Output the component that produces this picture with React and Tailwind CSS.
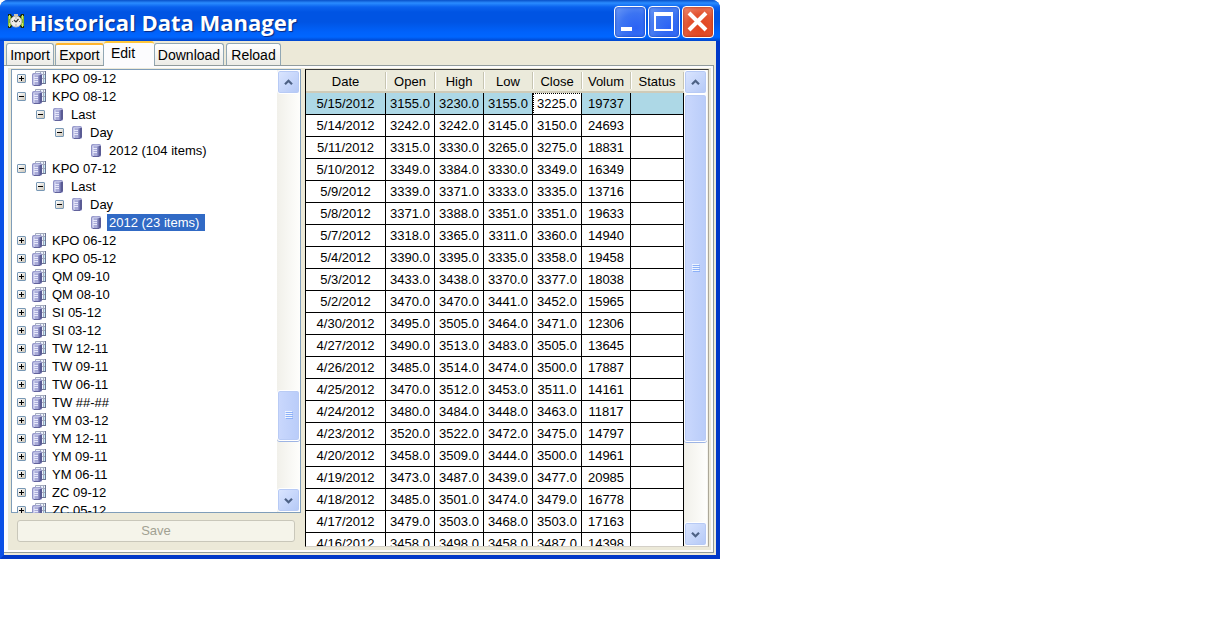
import React from "react";

const tabs = [
  { name: "Import", style: "mt-0.5 mr-px h-[22px] w-12 rounded-t-[3px] border border-b-0 border-[#91a7b4] bg-gradient-to-b from-white to-[#ecebe6]" },
  { name: "Export", style: "mt-0.5 h-[22px] w-[49px] rounded-t-[3px] border border-b-0 border-t-2 border-[#91a7b4] border-t-[#ffb42c] bg-gradient-to-b from-white to-[#ecebe6]" },
  { name: "Edit", style: "z-10 -mb-px h-[25px] w-[50px] rounded-t-[3px] border-t-2 border-t-[#ffc73c] bg-[#fcfcfe] pr-3 pb-1" },
  { name: "Download", style: "mt-0.5 mr-0.5 h-[22px] w-[70px] rounded-t-[3px] border border-b-0 border-[#91a7b4] bg-gradient-to-b from-white to-[#ecebe6]" },
  { name: "Reload", style: "mt-0.5 h-[22px] w-[55px] rounded-t-[3px] border border-b-0 border-[#91a7b4] bg-gradient-to-b from-white to-[#ecebe6]" },
];

const nodes = [
  ["KPO 09-12", 0, false],
  ["KPO 08-12", 0, true],
  ["Last", 1, true],
  ["Day", 2, true],
  ["2012 (104 items)", 3, null],
  ["KPO 07-12", 0, true],
  ["Last", 1, true],
  ["Day", 2, true],
  ["2012 (23 items)", 3, null, true],
  ["KPO 06-12", 0, false],
  ["KPO 05-12", 0, false],
  ["QM 09-10", 0, false],
  ["QM 08-10", 0, false],
  ["SI 05-12", 0, false],
  ["SI 03-12", 0, false],
  ["TW 12-11", 0, false],
  ["TW 09-11", 0, false],
  ["TW 06-11", 0, false],
  ["TW ##-##", 0, false],
  ["YM 03-12", 0, false],
  ["YM 12-11", 0, false],
  ["YM 09-11", 0, false],
  ["YM 06-11", 0, false],
  ["ZC 09-12", 0, false],
  ["ZC 05-12", 0, false],
];

const indents = ["pl-1.5", "pl-[25px]", "pl-[44px]", "pl-[63px]"];

const columns = [
  ["Date", "w-[80px]"],
  ["Open", "w-[49px]"],
  ["High", "w-[49px]"],
  ["Low", "w-[49px]"],
  ["Close", "w-[49px]"],
  ["Volum", "w-[49px]"],
  ["Status", ""],
];

const rows = [
  ["5/15/2012", "3155.0", "3230.0", "3155.0", "3225.0", "19737"],
  ["5/14/2012", "3242.0", "3242.0", "3145.0", "3150.0", "24693"],
  ["5/11/2012", "3315.0", "3330.0", "3265.0", "3275.0", "18831"],
  ["5/10/2012", "3349.0", "3384.0", "3330.0", "3349.0", "16349"],
  ["5/9/2012", "3339.0", "3371.0", "3333.0", "3335.0", "13716"],
  ["5/8/2012", "3371.0", "3388.0", "3351.0", "3351.0", "19633"],
  ["5/7/2012", "3318.0", "3365.0", "3311.0", "3360.0", "14940"],
  ["5/4/2012", "3390.0", "3395.0", "3335.0", "3358.0", "19458"],
  ["5/3/2012", "3433.0", "3438.0", "3370.0", "3377.0", "18038"],
  ["5/2/2012", "3470.0", "3470.0", "3441.0", "3452.0", "15965"],
  ["4/30/2012", "3495.0", "3505.0", "3464.0", "3471.0", "12306"],
  ["4/27/2012", "3490.0", "3513.0", "3483.0", "3505.0", "13645"],
  ["4/26/2012", "3485.0", "3514.0", "3474.0", "3500.0", "17887"],
  ["4/25/2012", "3470.0", "3512.0", "3453.0", "3511.0", "14161"],
  ["4/24/2012", "3480.0", "3484.0", "3448.0", "3463.0", "11817"],
  ["4/23/2012", "3520.0", "3522.0", "3472.0", "3475.0", "14797"],
  ["4/20/2012", "3458.0", "3509.0", "3444.0", "3500.0", "14961"],
  ["4/19/2012", "3473.0", "3487.0", "3439.0", "3477.0", "20985"],
  ["4/18/2012", "3485.0", "3501.0", "3474.0", "3479.0", "16778"],
  ["4/17/2012", "3479.0", "3503.0", "3468.0", "3503.0", "17163"],
  ["4/16/2012", "3458.0", "3498.0", "3458.0", "3487.0", "14398"],
];

function ClockIcon() {
  return (
    <svg viewBox="0 0 18 17" className="h-[17px] w-[18px] shrink-0" aria-hidden="true">
      <path d="M1 1h3l1 2h8l1-2h3v14h-3l-1-2H5l-1 2H1z" fill="#1b2a12" />
      <path d="M1 3h3v10H1zM14 3h3v10h-3z" fill="#7fb436" />
      <path d="M2 2h1v4H2zM15 2h1v4h-1zM2 10h1v4H2zM15 10h1v4h-1z" fill="#d0e85e" />
      <circle cx="9" cy="8.500" r="5.500" fill="#efeeeb" stroke="#c2bdb4" />
      <path d="M7 1h4v2H7z" fill="#c9c3b8" />
      <path d="M9 4.500v1M9 11.500v1M5 8.500h1M12 8.500h1" stroke="#777" />
      <path d="M9 9l2.500-3M9 9L7 7" stroke="#333" strokeWidth="1.200" fill="none" />
    </svg>
  );
}

function Cylinder() {
  return (
    <>
      <path d="M0 2Q0 0 2 0h6q2 0 2 2v9q0 2-2 2H2q-2 0-2-2z" fill="#8e90c6" />
      <path d="M1 2h2v10H2l-1-1z" fill="#c6c8e8" />
      <path d="M3 2h3v10H3z" fill="#a9abd8" />
      <path d="M7 2h1v10H7z" fill="#7476b0" />
      <path d="M8 2h2v9l-1 1H8z" fill="#5a5b94" />
      <path d="M1 1.500Q2 .500 5 .500t4 1Q8 2.500 5 2.500t-4-1z" fill="#bfc1e4" />
      <path d="M2 4.500h4M2 6.500h4M2 8.500h4" stroke="#e6e7fa" />
      <path d="M2 12.500h6" stroke="#62639c" />
    </>
  );
}

function DatabaseIcon({ group }) {
  return (
    <svg viewBox="0 0 16 16" className="size-4 shrink-0" aria-hidden="true">
      {group ? (
        <>
          <path d="M4.500 1.500h10v12h-10z" fill="#eef4fd" stroke="#a3aabd" />
          <path d="M4 4.500h11M11 8.500h4M9.500 1v4M12.500 1v12" stroke="#a3aabd" />
          <path d="M13 5h1v3h-1zM13 9h1v4h-1z" fill="#c4ecf8" />
          <path d="M14.500 1v13M11 13.500h4" stroke="#6c7594" />
          <g transform="translate(1 3)"><Cylinder /></g>
        </>
      ) : (
        <g transform="translate(3 2)"><Cylinder /></g>
      )}
    </svg>
  );
}

function Toggle({ open, label }) {
  return (
    <button
      type="button"
      aria-label={`${open ? "Collapse" : "Expand"} ${label}`}
      className="size-[9px] shrink-0 rounded-[1px] border border-[#7898b5] bg-gradient-to-br from-white to-[#cdc7ba]"
    >
      <svg viewBox="0 0 7 7" className="size-[7px]" aria-hidden="true">
        <path d={open ? "M1 3.500h5" : "M1 3.500h5M3.500 1v5"} stroke="#000" />
      </svg>
    </button>
  );
}

function ScrollArrow({ up }) {
  return (
    <button
      type="button"
      aria-label={up ? "Scroll up" : "Scroll down"}
      className="flex h-6 shrink-0 items-center justify-center rounded-[3px] border border-white bg-gradient-to-br from-[#dbe6ff] to-[#b4c8f6] shadow-[inset_0_0_0_1px_#b7caf5]"
    >
      <svg viewBox="0 0 9 7" className="h-[7px] w-[9px]" aria-hidden="true">
        <path d={up ? "M1 5.300l3.500-3.500L8 5.300" : "M1 1.700l3.500 3.500L8 1.700"} fill="none" stroke="#4d6185" strokeWidth="2.200" />
      </svg>
    </button>
  );
}

function ScrollBar({ before, thumb, after }) {
  return (
    <div className="flex w-[23px] shrink-0 flex-col bg-gradient-to-r from-[#f1f0ea] to-[#fefefc]">
      <ScrollArrow up />
      <div className={before} />
      <div className={`flex items-center justify-center rounded-[3px] border border-white bg-gradient-to-r from-[#cad8fd] to-[#b9ccf9] shadow-[inset_0_0_0_1px_#b9cbf5,0_1px_0_#9db4e4] ${thumb}`}>
        <svg viewBox="0 0 8 8" className="size-2" aria-hidden="true">
          <path d="M0 .500h7M0 2.500h7M0 4.500h7M0 6.500h7" stroke="#eef4fe" />
          <path d="M1 1.500h7M1 3.500h7M1 5.500h7M1 7.500h7" stroke="#8cb0f8" />
        </svg>
      </div>
      <div className={after} />
      <ScrollArrow />
    </div>
  );
}

function TitleBar() {
  const base = "flex size-8 items-center justify-center rounded-[4px] border border-white";
  return (
    <header className="flex h-[41px] items-center rounded-t-lg bg-[linear-gradient(to_bottom,#0850c8_0px,#2a8cff_3px,#0a62ee_7px,#0054e3_12px,#0054e3_22px,#0062fb_32px,#0066ff_37px,#0045cc_41px)] pt-0.5 pr-1.5 pl-[7px]">
      <ClockIcon />
      <h1 className="ml-[5px] flex-1 truncate font-['Open_Sans','Noto_Sans',sans-serif] text-[22px] leading-8 font-bold text-white [text-shadow:1px_1px_1px_#0a2a80]">
        Historical Data Manager
      </h1>
      <div className="flex gap-0.5">
        <button type="button" aria-label="Minimize" className={`${base} bg-[radial-gradient(circle_at_70%_70%,#2b62f5,#3c74f2_50%,#6f9cf5)] shadow-[inset_0_0_3px_#0c3bbd]`}>
          <svg viewBox="0 0 30 30" className="size-[30px]" aria-hidden="true"><path d="M6 20h11v4H6z" fill="#fff" /></svg>
        </button>
        <button type="button" aria-label="Maximize" className={`${base} bg-[radial-gradient(circle_at_70%_70%,#2b62f5,#3c74f2_50%,#6f9cf5)] shadow-[inset_0_0_3px_#0c3bbd]`}>
          <svg viewBox="0 0 30 30" className="size-[30px]" aria-hidden="true"><path d="M5 5h19v19H5zM7 9v13h15V9z" fill="#fff" fillRule="evenodd" /></svg>
        </button>
        <button type="button" aria-label="Close" className={`${base} bg-[radial-gradient(circle_at_60%_70%,#e2431c,#e35432_50%,#ee9078)] shadow-[inset_0_0_3px_#a32408]`}>
          <svg viewBox="0 0 30 30" className="size-[30px]" aria-hidden="true"><path d="M6 6l17 17M23 6L6 23" stroke="#fff" strokeWidth="4" /></svg>
        </button>
      </div>
    </header>
  );
}

function Tree() {
  return (
    <div className="flex h-[444px] bg-white shadow-[inset_0_0_0_1px_#7f9db9]">
      <ul className="flex-1 overflow-hidden">
        {nodes.map(([label, level, open, selected], i) => (
          <li key={i} className={`flex h-[18px] items-center ${indents[level]}`}>
            {open === null ? <span className="w-[9px] shrink-0" /> : <Toggle open={open} label={label} />}
            <span className="ml-[5px] flex"><DatabaseIcon group={level === 0} /></span>
            <a
              href="#node"
              className={`ml-[3px] h-[17px] pr-1.5 pl-0.5 leading-[17px] whitespace-nowrap ${selected ? "bg-[#316ac5] text-white" : ""}`}
            >
              {label}
            </a>
          </li>
        ))}
      </ul>
      <div className="flex py-px pr-px">
        <ScrollBar before="grow-[297] basis-0" thumb="grow-[50] basis-0" after="grow-[47] basis-0" />
      </div>
    </div>
  );
}

function PriceTable() {
  return (
    <div className="flex h-[478px] border-t border-r border-b border-l border-t-[#3a3a3a] border-r-[#aca899] border-b-[#d4d0c8] border-l-black bg-white">
      <div className="min-w-0 flex-1 overflow-hidden">
        <table className="w-full table-fixed border-separate border-spacing-0 text-center">
          <thead>
            <tr className="h-[23px] bg-[#ebeadb]">
              {columns.map(([name, width]) => (
                <th key={name} className={`border-b-2 border-[#cfcbb8] p-0 font-normal whitespace-nowrap ${width}`}>
                  <span className="block h-[17px] border-r border-[#c7c5b2] leading-[19px] shadow-[1px_0_0_#fff]">{name}</span>
                </th>
              ))}
            </tr>
          </thead>
          <tbody>
            {rows.map((row, r) => (
              <tr key={row[0]} className={`h-[22px] ${r === 0 ? "bg-[#add8e6]" : ""}`}>
                {row.map((value, c) => (
                  <td
                    key={c}
                    className={`border-r border-b border-black p-0 leading-[21px] ${r === 0 && c === 4 ? "bg-white outline-1 -outline-offset-1 outline-dotted outline-black" : ""}`}
                  >
                    {value}
                  </td>
                ))}
                <td className="border-r border-b border-black p-0" />
              </tr>
            ))}
          </tbody>
        </table>
      </div>
      <ScrollBar before="grow-0" thumb="grow-[349] basis-0" after="grow-[81] basis-0" />
      <div className="w-px bg-[#f4f3ee]" />
    </div>
  );
}

export default function App() {
  return (
    <main className="min-h-screen bg-white font-['Liberation_Sans',Arial,sans-serif] text-[13px] text-black">
      <section className="w-full max-w-[720px] rounded-t-lg bg-[#0045d8]">
        <TitleBar />
        <div className="border-4 border-t-0 border-t-[#0038c8] border-r-[#0038c8] border-b-[#0038c8] border-l-[#0a4fe6] bg-[#ece9d8] pr-0.5 pb-0.5">
          <nav role="tablist" className="flex items-start pl-0.5 text-[14px]">
            {tabs.map((tab) => (
              <button
                key={tab.name}
                type="button"
                role="tab"
                aria-selected={tab.name === "Edit"}
                className={`flex items-center justify-center leading-5 ${tab.style}`}
              >
                {tab.name}
              </button>
            ))}
          </nav>
          <div className="border-t border-r border-b border-[#919b9c]">
            <div className="grid grid-cols-[290px_minmax(0,1fr)] gap-x-1 border-t-2 border-r-2 border-b-2 border-l-4 border-[#fcfcfe] bg-[#ece9d8] pt-px pr-0.5 pb-[3px] pl-[3px]">
              <div>
                <Tree />
                <div className="px-1.5 pt-[7px]">
                  <button type="button" disabled className="h-[22px] w-full rounded-[3px] border border-[#c9c7ba] bg-[#f5f4ea] text-[#a1a192]">
                    Save
                  </button>
                </div>
              </div>
              <PriceTable />
            </div>
          </div>
        </div>
      </section>
    </main>
  );
}
